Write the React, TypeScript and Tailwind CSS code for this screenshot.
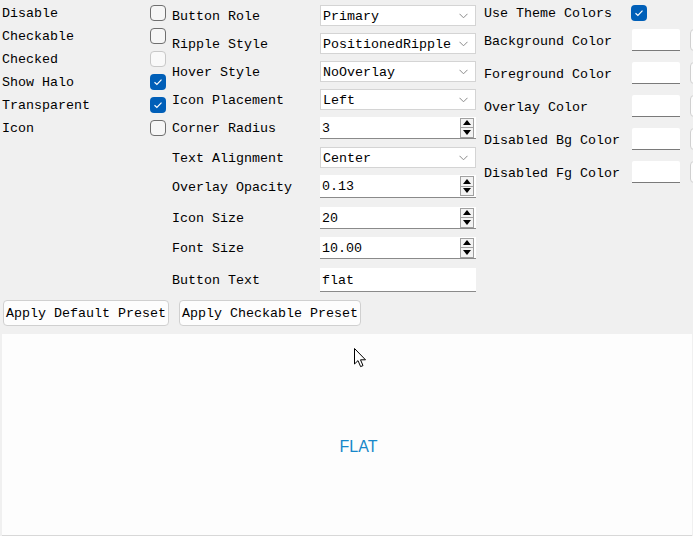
import React from "react";

const mono = { fontFamily: '"Liberation Mono", "DejaVu Sans Mono", monospace' };

function Check({ checked, disabled }: { checked?: boolean; disabled?: boolean }) {
  if (checked) {
    return (
      <div className="w-[16px] h-[16px] rounded-[4px] bg-[#005fb8] flex items-center justify-center shrink-0">
        <svg width="10" height="8" viewBox="0 0 10 8">
          <path d="M1.5 4.2 L3.9 6.4 L8.5 1.6" fill="none" stroke="#ffffff" strokeWidth="1.2" />
        </svg>
      </div>
    );
  }
  return (
    <div
      className={
        disabled
          ? "w-[16px] h-[16px] rounded-[4px] border border-[#c8c8c8] bg-[#f9f9f9] shrink-0"
          : "w-[16px] h-[16px] rounded-[4px] border border-[#6f6f6f] bg-[#f6f6f6] shrink-0"
      }
    />
  );
}

function Combo({ value, h }: { value: string; h: string }) {
  return (
    <div className={`w-[156px] shrink-0 ${h} bg-white border border-[#d4d4d4] flex items-center justify-between pl-[2px] pr-[7px]`}>
      <span className="pt-[2px]">{value}</span>
      <svg width="9" height="6" viewBox="0 0 9 6">
        <path d="M0.5 0.8 L4.5 4.8 L8.5 0.8" fill="none" stroke="#8a8a8a" strokeWidth="1" />
      </svg>
    </div>
  );
}

function Spin({ value, h }: { value: string; h: string }) {
  return (
    <div className={`w-[156px] shrink-0 ${h} bg-white border-b border-[#8a8a8a] flex items-center justify-between pl-[2px] pr-[2px]`}>
      <span className="pt-[2px]">{value}</span>
      <div className="flex flex-col w-[14px] h-[20px] border border-[#a0a0a0] bg-[#f3f3f3]">
        <div className="flex-1 flex items-center justify-center border-b border-[#a0a0a0]">
          <svg width="8" height="5" viewBox="0 0 8 5"><path d="M0 5 L4 0 L8 5 Z" fill="#000" /></svg>
        </div>
        <div className="flex-1 flex items-center justify-center">
          <svg width="8" height="5" viewBox="0 0 8 5"><path d="M0 0 L4 5 L8 0 Z" fill="#000" /></svg>
        </div>
      </div>
    </div>
  );
}

function MidRow({ label, mt, children }: { label: string; mt: string; children: React.ReactNode }) {
  return (
    <div className={`flex items-center ${mt}`}>
      <div className="w-[148px] shrink-0 pt-[2px]">{label}</div>
      {children}
    </div>
  );
}

function ColorRow({ label, mt }: { label: string; mt: string }) {
  return (
    <div className={`flex items-center ${mt}`}>
      <div className="w-[148px] shrink-0 pt-[3px]">{label}</div>
      <div className="w-[48px] shrink-0 h-[22px] bg-white border-b border-[#7a7a7a] rounded-t-[2px]" />
      <div className="ml-[10px] shrink-0 w-[48px] h-[22px] bg-[#fdfdfd] border border-[#d0d0d0] rounded-[4px]" />
    </div>
  );
}

export default function App() {
  const leftRows: { label: string; checked?: boolean; disabled?: boolean }[] = [
    { label: "Disable" },
    { label: "Checkable" },
    { label: "Checked", disabled: true },
    { label: "Show Halo", checked: true },
    { label: "Transparent", checked: true },
    { label: "Icon" },
  ];
  return (
    <div className="w-[693px] h-[536px] bg-[#f0f0f0] overflow-hidden relative text-[13.33px] text-black leading-none" style={mono}>
      <div className="flex h-[296px]">
        {/* left column */}
        <div className="w-[166px] shrink-0 pl-[2px] pt-[1px] flex flex-col">
          {leftRows.map((r) => (
            <div key={r.label} className="h-[23px] flex items-center justify-between">
              <span className="pt-[2px]">{r.label}</span>
              <Check checked={r.checked} disabled={r.disabled} />
            </div>
          ))}
        </div>
        {/* middle column */}
        <div className="ml-[6px] w-[306px] shrink-0 pt-[5px] flex flex-col">
          <MidRow label="Button Role" mt="mt-0"><Combo value="Primary" h="h-[21px]" /></MidRow>
          <MidRow label="Ripple Style" mt="mt-[7px]"><Combo value="PositionedRipple" h="h-[21px]" /></MidRow>
          <MidRow label="Hover Style" mt="mt-[7px]"><Combo value="NoOverlay" h="h-[21px]" /></MidRow>
          <MidRow label="Icon Placement" mt="mt-[7px]"><Combo value="Left" h="h-[21px]" /></MidRow>
          <MidRow label="Corner Radius" mt="mt-[7px]"><Spin value="3" h="h-[22px]" /></MidRow>
          <MidRow label="Text Alignment" mt="mt-[8px]"><Combo value="Center" h="h-[21px]" /></MidRow>
          <MidRow label="Overlay Opacity" mt="mt-[7px]"><Spin value="0.13" h="h-[23px]" /></MidRow>
          <MidRow label="Icon Size" mt="mt-[9px]"><Spin value="20" h="h-[22px]" /></MidRow>
          <MidRow label="Font Size" mt="mt-[8px]"><Spin value="10.00" h="h-[22px]" /></MidRow>
          <MidRow label="Button Text" mt="mt-[9px]">
            <div className="w-[156px] shrink-0 h-[24px] bg-white border-b border-[#8a8a8a] flex items-center pl-[2px] pt-[2px]">flat</div>
          </MidRow>
        </div>
        {/* right column */}
        <div className="ml-[6px] flex flex-col pt-[4px] shrink-0">
          <div className="flex items-center h-[18px]">
            <div className="w-[147px] shrink-0 pt-[2px]">Use Theme Colors</div>
            <Check checked />
          </div>
          <ColorRow label="Background Color" mt="mt-[7px]" />
          <ColorRow label="Foreground Color" mt="mt-[11px]" />
          <ColorRow label="Overlay Color" mt="mt-[11px]" />
          <ColorRow label="Disabled Bg Color" mt="mt-[11px]" />
          <ColorRow label="Disabled Fg Color" mt="mt-[11px]" />
        </div>
      </div>
      {/* buttons */}
      <div className="flex gap-[10px] pl-[3px] mt-[4px]">
        <div className="h-[26px] px-[2px] pt-[2px] flex items-center bg-[#fdfdfd] border border-[#d0d0d0] rounded-[4px]">Apply Default Preset</div>
        <div className="h-[26px] px-[2px] pt-[2px] flex items-center bg-[#fdfdfd] border border-[#d0d0d0] rounded-[4px]">Apply Checkable Preset</div>
      </div>
      {/* preview */}
      <div className="ml-[2px] mt-[8px] w-[690px] h-[202px] bg-[#fdfdfd] border-b border-[#d8d8d8] flex items-center justify-center">
        <span className="text-[16px] text-[#1787c9] mt-[25px] ml-[23px]" style={{ fontFamily: '"Liberation Sans", Arial, sans-serif' }}>FLAT</span>
      </div>
      {/* mouse cursor */}
      <svg className="absolute left-[354px] top-[348px]" width="13" height="20" viewBox="0 0 13 20">
        <path d="M0.5 0.5 L0.5 16 L4 12.6 L6.6 18.6 L9 17.6 L6.5 11.8 L11.5 11.8 Z" fill="#ffffff" stroke="#000000" strokeWidth="1" strokeLinejoin="round" />
      </svg>
    </div>
  );
}
